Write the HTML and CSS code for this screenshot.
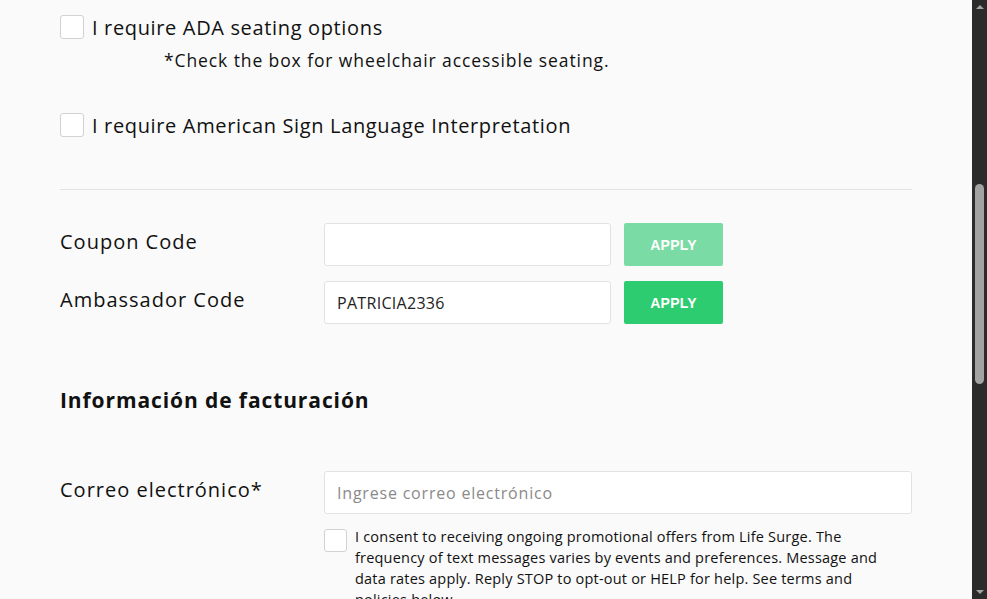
FILE: index.html
```html
<!DOCTYPE html>
<html lang="en">
<head>
    <meta charset="UTF-8">
    <meta name="viewport" content="width=device-width, initial-scale=1.0">
    <title>Checkout</title>
    <link rel="stylesheet" href="styles.css">
</head>
<body>
    <div class="page">
        <div class="form">
            <div class="check-row first">
                <span class="checkbox"></span>
                <span class="check-label">I require ADA seating options</span>
            </div>
            <div class="note">*Check the box for wheelchair accessible seating.</div>
            <div class="check-row second">
                <span class="checkbox"></span>
                <span class="check-label">I require American Sign Language Interpretation</span>
            </div>

            <hr class="divider">

            <div class="code-row">
                <label class="field-label">Coupon Code</label>
                <input class="text-input" type="text">
                <button class="apply-btn disabled">APPLY</button>
            </div>
            <div class="code-row">
                <label class="field-label">Ambassador Code</label>
                <input class="text-input" type="text" value="PATRICIA2336">
                <button class="apply-btn">APPLY</button>
            </div>

            <h2 class="section-title">Información de facturación</h2>

            <div class="email-row">
                <label class="field-label">Correo electrónico*</label>
                <div class="email-col">
                    <input class="text-input wide" type="text" placeholder="Ingrese correo electrónico">
                    <div class="consent">
                        <span class="checkbox"></span>
                        <p>I consent to receiving ongoing promotional offers from Life Surge. The frequency of text messages varies by events and preferences. Message and data rates apply. Reply STOP to opt-out or HELP for help. See terms and policies below.</p>
                    </div>
                </div>
            </div>
        </div>
    </div>
    <div class="scrollbar">
        <span class="arrow up"></span>
        <div class="track"><span class="thumb"></span></div>
        <span class="arrow down"></span>
    </div>
</body>
</html>
```

FILE: styles.css
```css
* {
    margin: 0;
    padding: 0;
    box-sizing: border-box;
}

body {
    font-family: 'Open Sans', 'Noto Sans', sans-serif;
    color: #111;
    display: flex;
    height: 100vh;
    overflow: hidden;
    background: #fafafa;
}

.page {
    flex: 1;
    padding: 15px 60px 0 60px;
}

.form {
    width: 852px;
}

.check-row {
    display: flex;
    align-items: center;
    gap: 8px;
    height: 24px;
}

.checkbox {
    width: 24px;
    height: 24px;
    flex: none;
    background: #fff;
    border: 1px solid #d2d2d2;
    border-radius: 3px;
}

.check-label {
    font-size: 20px;
    letter-spacing: 0.65px;
}

.note {
    margin: 10px 0 0 104px;
    font-size: 17.5px;
    letter-spacing: 0.9px;
    height: 22px;
    line-height: 22px;
}

.check-row.second {
    margin-top: 42px;
}

.divider {
    border: none;
    border-top: 1px solid #e3e3e3;
    margin-top: 52px;
}

.code-row {
    display: grid;
    grid-template-columns: 264px 287px auto;
    align-items: center;
    height: 43px;
    margin-top: 15px;
}

.divider + .code-row {
    margin-top: 33px;
}

.field-label {
    font-size: 20px;
    letter-spacing: 1px;
    align-self: start;
    line-height: 38px;
}

.text-input {
    height: 43px;
    background: #fff;
    border: 1px solid #e2e2e2;
    border-radius: 3px;
    padding: 0 12px;
    font-family: 'Open Sans', sans-serif;
    font-size: 16px;
    letter-spacing: 0.3px;
    color: #222;
    outline: none;
}

.text-input::placeholder {
    color: #8a8a8a;
    letter-spacing: 0.8px;
}

.apply-btn {
    width: 99px;
    height: 43px;
    margin-left: 13px;
    border: none;
    border-radius: 2px;
    background: #2ecc71;
    color: #fff;
    font-family: 'Liberation Sans', sans-serif;
    font-weight: 700;
    font-size: 14px;
    letter-spacing: 0.2px;
}

.apply-btn.disabled {
    background: #7adca4;
}

.section-title {
    font-size: 21px;
    font-weight: 700;
    letter-spacing: 0.9px;
    margin-top: 62px;
    height: 28px;
    line-height: 28px;
}

.email-row {
    display: grid;
    grid-template-columns: 264px 588px;
    margin-top: 57px;
}

.email-col {
    display: flex;
    flex-direction: column;
}

.consent {
    display: flex;
    gap: 8px;
    margin-top: 15px;
}

.consent .checkbox {
    width: 23px;
    height: 23px;
}

.consent p {
    font-size: 14.5px;
    line-height: 21px;
    width: 545px;
    margin-top: -3px;
    letter-spacing: 0.2px;
}

.scrollbar {
    width: 15px;
    background: #2b2b2b;
    display: flex;
    flex-direction: column;
    align-items: center;
}

.track {
    flex: 1;
    width: 100%;
    display: flex;
    justify-content: center;
    padding-top: 170px;
}

.thumb {
    width: 9px;
    height: 200px;
    background: #a3a3a3;
    border-radius: 5px;
}

.arrow {
    width: 0;
    height: 0;
    border-left: 4px solid transparent;
    border-right: 4px solid transparent;
    margin: 5px 0;
}

.arrow.up {
    border-bottom: 4px solid #a3a3a3;
}

.arrow.down {
    border-top: 4px solid #a3a3a3;
}
```
